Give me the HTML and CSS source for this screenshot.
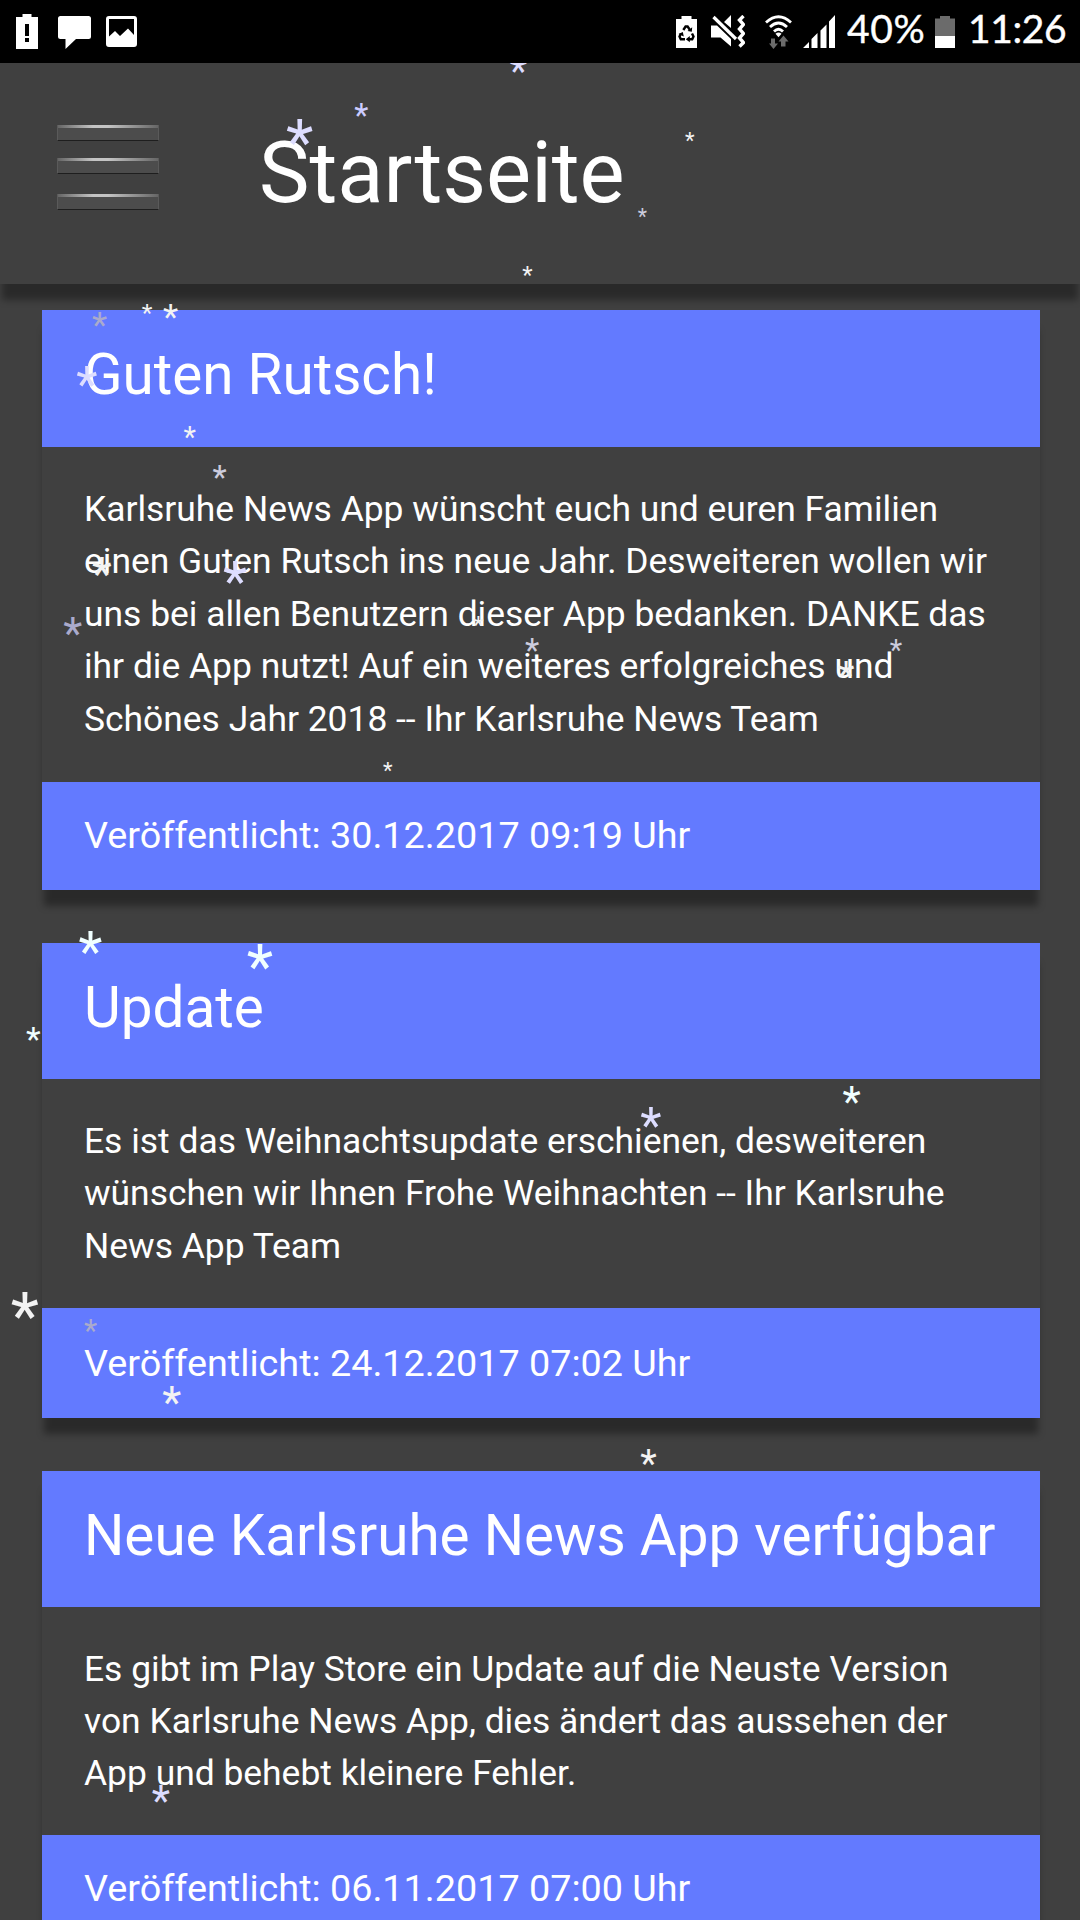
FILE: index.html
```html
<!DOCTYPE html>
<html lang="de">
<head>
	<meta charset="utf-8">
	<title>Karlsruhe News App</title>
	<link rel="stylesheet" href="styles.css">
</head>
<body>
	<div class="statusbar">
		<div class="status-left">
			<svg width="23" height="35" viewBox="0 0 23 35">
				<path fill="#fff" d="M6.500 0h9v3H22v32H0V3h6.500z"/>
				<path fill="#000" d="M9 10h4v12H9zM9 24h4v4H9z"/>
			</svg>
			<svg width="33" height="33" viewBox="0 0 33 33">
				<path fill="#fff" d="M2.500 0h28Q33 0 33 2.500v18Q33 23 30.500 23H18L7.500 33V23h-5Q0 23 0 20.500v-18Q0 0 2.500 0z"/>
			</svg>
			<svg width="31" height="31" viewBox="0 0 31 31">
				<path fill="#fff" fill-rule="evenodd" d="M3 0h25q3 0 3 3v25q0 3-3 3H3q-3 0-3-3V3q0-3 3-3zM3 3v17.500l6-5.500 5 5 8-7.500 6 6.500V3z"/>
			</svg>
		</div>
		<div class="status-right">
			<svg class="ic-saver" width="21" height="32" viewBox="0 0 21 32">
				<path fill="#fff" d="M5.500 0h10v3H21v29H0V3h5.500z"/>
				<g fill="none" stroke="#000" stroke-width="2.400">
					<path d="M7.300 14l2.300-3.500h2L14 14M16 17.500l1.500 3-1.300 2.800H13M9 23.300H4.800L3.500 20.500 5 17.500"/>
				</g>
				<path fill="#000" d="M11.500 15l4.300.7.400-4.500zM13.800 20v6.300l-4-3.100zM2.500 18l4.300-2 1 4.500z"/>
			</svg>
			<svg class="ic-mute" width="34" height="33" viewBox="0 0 34 33">
				<path fill="#fff" d="M0 10.500h6l14 13.500V31.500L9.500 22.500H0zM13 7l7-7v13z"/>
				<path stroke="#fff" stroke-width="3.200" fill="none" d="M2.500 2l22.500 22"/>
				<path stroke="#fff" stroke-width="3.400" fill="none" d="M32.500 1l-4 4 4 4.500-4 4.500 4 4.500-4 4.500 4 4.500-4 4"/>
			</svg>
			<svg class="ic-wifi" width="28" height="34" viewBox="0 0 28 34">
				<g fill="none" stroke="#fff" stroke-width="2.800">
					<path d="M1 7.500Q13.500-4 26 7.500M5 12Q13.500 4 22 12M9 16.500q4.500-4.500 9 0"/>
				</g>
				<path fill="#fff" d="M10.500 18.800q3-2.400 6 0l-3 3.400z"/>
				<path fill="#6b6b6b" d="M6 23.500h4v5h3L8.500 34 4 28.500h2zM16 31.500v-5h-2.500l5-6 5 6H20.500v5z"/>
			</svg>
			<svg class="ic-signal" width="32" height="33" viewBox="0 0 32 33">
				<path fill="#fff" d="M0 33l6-6v6zM8.500 24l6-6v15h-6zM17.500 15.500l6-6V33h-6zM26 6.500L32 0v33h-6z"/>
			</svg>
			<span class="percent">40%</span>
			<svg class="ic-battery" width="20" height="32" viewBox="0 0 20 32">
				<path fill="#6b6b6b" d="M5 0h10v2.500h5V20H0V2.500h5z"/>
				<path fill="#fff" d="M0 20h20v12H0z"/>
			</svg>
			<span class="clock">11:26</span>
		</div>
	</div>

	<div class="header">
		<div class="menu">
			<span></span>
			<span></span>
			<span></span>
		</div>
		<h1>Startseite</h1>
	</div>

	<div class="news">
		<div class="card first">
			<h2>Guten Rutsch!</h2>
			<p>Karlsruhe News App wünscht euch und euren Familien einen Guten Rutsch ins neue Jahr. Desweiteren wollen wir uns bei allen Benutzern dieser App bedanken. DANKE das ihr die App nutzt! Auf ein weiteres erfolgreiches und Schönes Jahr 2018 -- Ihr Karlsruhe News Team</p>
			<div class="date">Veröffentlicht: 30.12.2017 09:19 Uhr</div>
		</div>
		<div class="card">
			<h2>Update</h2>
			<p>Es ist das Weihnachtsupdate erschienen, desweiteren wünschen wir Ihnen Frohe Weihnachten -- Ihr Karlsruhe News App Team</p>
			<div class="date">Veröffentlicht: 24.12.2017 07:02 Uhr</div>
		</div>
		<div class="card">
			<h2>Neue Karlsruhe News App verfügbar</h2>
			<p>Es gibt im Play Store ein Update auf die Neuste Version von Karlsruhe News App, dies ändert das aussehen der App und behebt kleinere Fehler.</p>
			<div class="date">Veröffentlicht: 06.11.2017 07:00 Uhr</div>
		</div>
	</div>

	<div id="snow"></div>
	<script src="snow.js"></script>
</body>
</html>
```
FILE: styles.css
```css
* {
	box-sizing: border-box;
}
body {
	margin: 0;
	height: 1920px;
	overflow: hidden;
	position: relative;
	background: #404040;
	color: #fff;
	font-family: Roboto, "Liberation Sans", sans-serif;
}

/* Statusleiste */
.statusbar {
	position: relative;
	z-index: 20;
	height: 63px;
	background: #000;
	display: flex;
	justify-content: space-between;
	padding: 0 15px 0 16px;
}
.status-left {
	display: flex;
	gap: 16px;
	padding-top: 16px;
}
.status-left svg:first-child {
	margin: -2px 3px 0 0;
}
.status-left svg:nth-child(2) {
	margin-right: -1px;
}
.status-right {
	display: flex;
	padding-top: 15px;
	font: 39px/27px Lato, sans-serif;
}
.status-right svg {
	flex: none;
}
.ic-saver {
	margin: 1px 14px 0 0;
}
.ic-mute {
	margin-right: 20px;
}
.ic-wifi {
	margin-right: 10px;
}
.ic-signal {
	margin-right: 12px;
}
.percent {
	width: 88px;
	white-space: nowrap;
	letter-spacing: .6px;
	-webkit-text-stroke: .4px #fff;
}
.ic-battery {
	margin: 1px 13px 0 0;
}
.clock {
	width: 97px;
	white-space: nowrap;
	letter-spacing: -.4px;
	-webkit-text-stroke: .4px #fff;
}

/* Kopfbereich */
.header {
	position: relative;
	height: 220.500px;
	display: flex;
	align-items: flex-start;
	padding-left: 57px;
	background: #404040;
	box-shadow: 0 18px 7px -2px rgba(0,0,0,.35);
}
.menu {
	width: 102px;
	padding-top: 62px;
}
.menu span {
	display: block;
	height: 16px;
	margin-bottom: 17px;
	border: 1px solid #5a5a5a;
	border-top: 0;
	border-bottom: 1px solid #1e1e1e;
	background: linear-gradient(90deg, #666, #c4c4c4 35%, #c4c4c4 50%, #666) 0 0 / 100% 3px no-repeat, #4c4c4c;
}
.menu span:nth-child(2) {
	margin-bottom: 20px;
}
.header h1 {
	margin: 59px 0 0 100px;
	font-size: 85px;
	font-weight: 400;
	line-height: 102px;
}

/* Karten */
.news {
	padding: 26.900px 40.500px 0 42px;
}
.card {
	margin-bottom: 52.500px;
	box-shadow: 0 18px 7px -2px rgba(0,0,0,.35);
	background: #404040;
}
.card h2 {
	margin: 0;
	height: 136.500px;
	padding: 31px 42px 0;
	background: #637aff;
	font-size: 56.600px;
	font-weight: 400;
	line-height: 67px;
	white-space: nowrap;
}
.card p {
	margin: 0;
	padding: 35.500px 42px 35.500px;
	font-size: 35.420px;
	line-height: 52.400px;
}
.card .date {
	height: 110.500px;
	padding: 29px 42px 0;
	background: #637aff;
	font-size: 37.750px;
	line-height: 52.500px;
}
.first p {
	padding: 36px 42px 37.500px;
}
.first .date {
	height: 108px;
	padding-top: 27px;
}
.card:last-child .date {
	padding-top: 27px;
}

/* Schneeflocken */
#snow {
	position: absolute;
	left: 0;
	top: 0;
	z-index: 10;
}
#snow span {
	position: absolute;
	line-height: 1;
	transform: translateX(-50%);
}
```
FILE: snow.js
```js
//x (Mitte), y (oben), Breite, Farbe
var flocken = [
	[518.3, 57.5, 16.3, "#ddf"],
	[361.3, 104.2, 13.3, "#ccf"],
	[299.7, 119, 25.7, "#ddf"],
	[689.7, 132, 9, "#f3f3f3"],
	[642.3, 209, 8.7, "#ccd"],
	[527.3, 267.5, 9.7, "#f3f3f3"],
	[147, 304.7, 10, "#f3f3f3"],
	[170.7, 304.7, 14.3, "#f3f3f3"],
	[99.5, 312.7, 14.3, "#aac"],
	[86.8, 367, 20, "#ddf"],
	[189.7, 427, 11.7, "#f3f3f3"],
	[219.7, 465.5, 13.4, "#ccd"],
	[102, 558, 18.6, "#f3f3f3"],
	[235, 561.7, 22.7, "#ddf"],
	[72.7, 617.7, 17.9, "#aac"],
	[478.3, 616.7, 10, "#f3f3f3"],
	[532, 638.7, 13.4, "#ccd"],
	[387.7, 762, 9, "#f3f3f3"],
	[896, 640, 11.7, "#ccd"],
	[846, 661, 16, "#f3f3f3"],
	[90.5, 932, 22.4, "#f0ffff"],
	[260, 944.7, 24.8, "#f0ffff"],
	[33.4, 1026, 13.8, "#f0ffff"],
	[851.6, 1086.7, 17.2, "#f0ffff"],
	[651, 1108, 20, "#ddf"],
	[648.5, 1450, 15.5, "#f3f3f3"],
	[24.8, 1292, 26.5, "#f3f3f3"],
	[90.6, 1320, 12.4, "#aac"],
	[171.8, 1386.7, 17.9, "#f3f3f3"],
	[161, 1785.5, 17.2, "#ddf"]
];
var snow = document.getElementById("snow");
for (var i = 0; i < flocken.length; i++) {
	var f = flocken[i];
	var size = f[2] / 0.405;
	var s = document.createElement("span");
	s.innerHTML = "*";
	s.style.left = f[0] + "px";
	s.style.top = (f[1] - size * 0.131) + "px";
	s.style.fontSize = size + "px";
	s.style.color = f[3];
	snow.appendChild(s);
}
```
